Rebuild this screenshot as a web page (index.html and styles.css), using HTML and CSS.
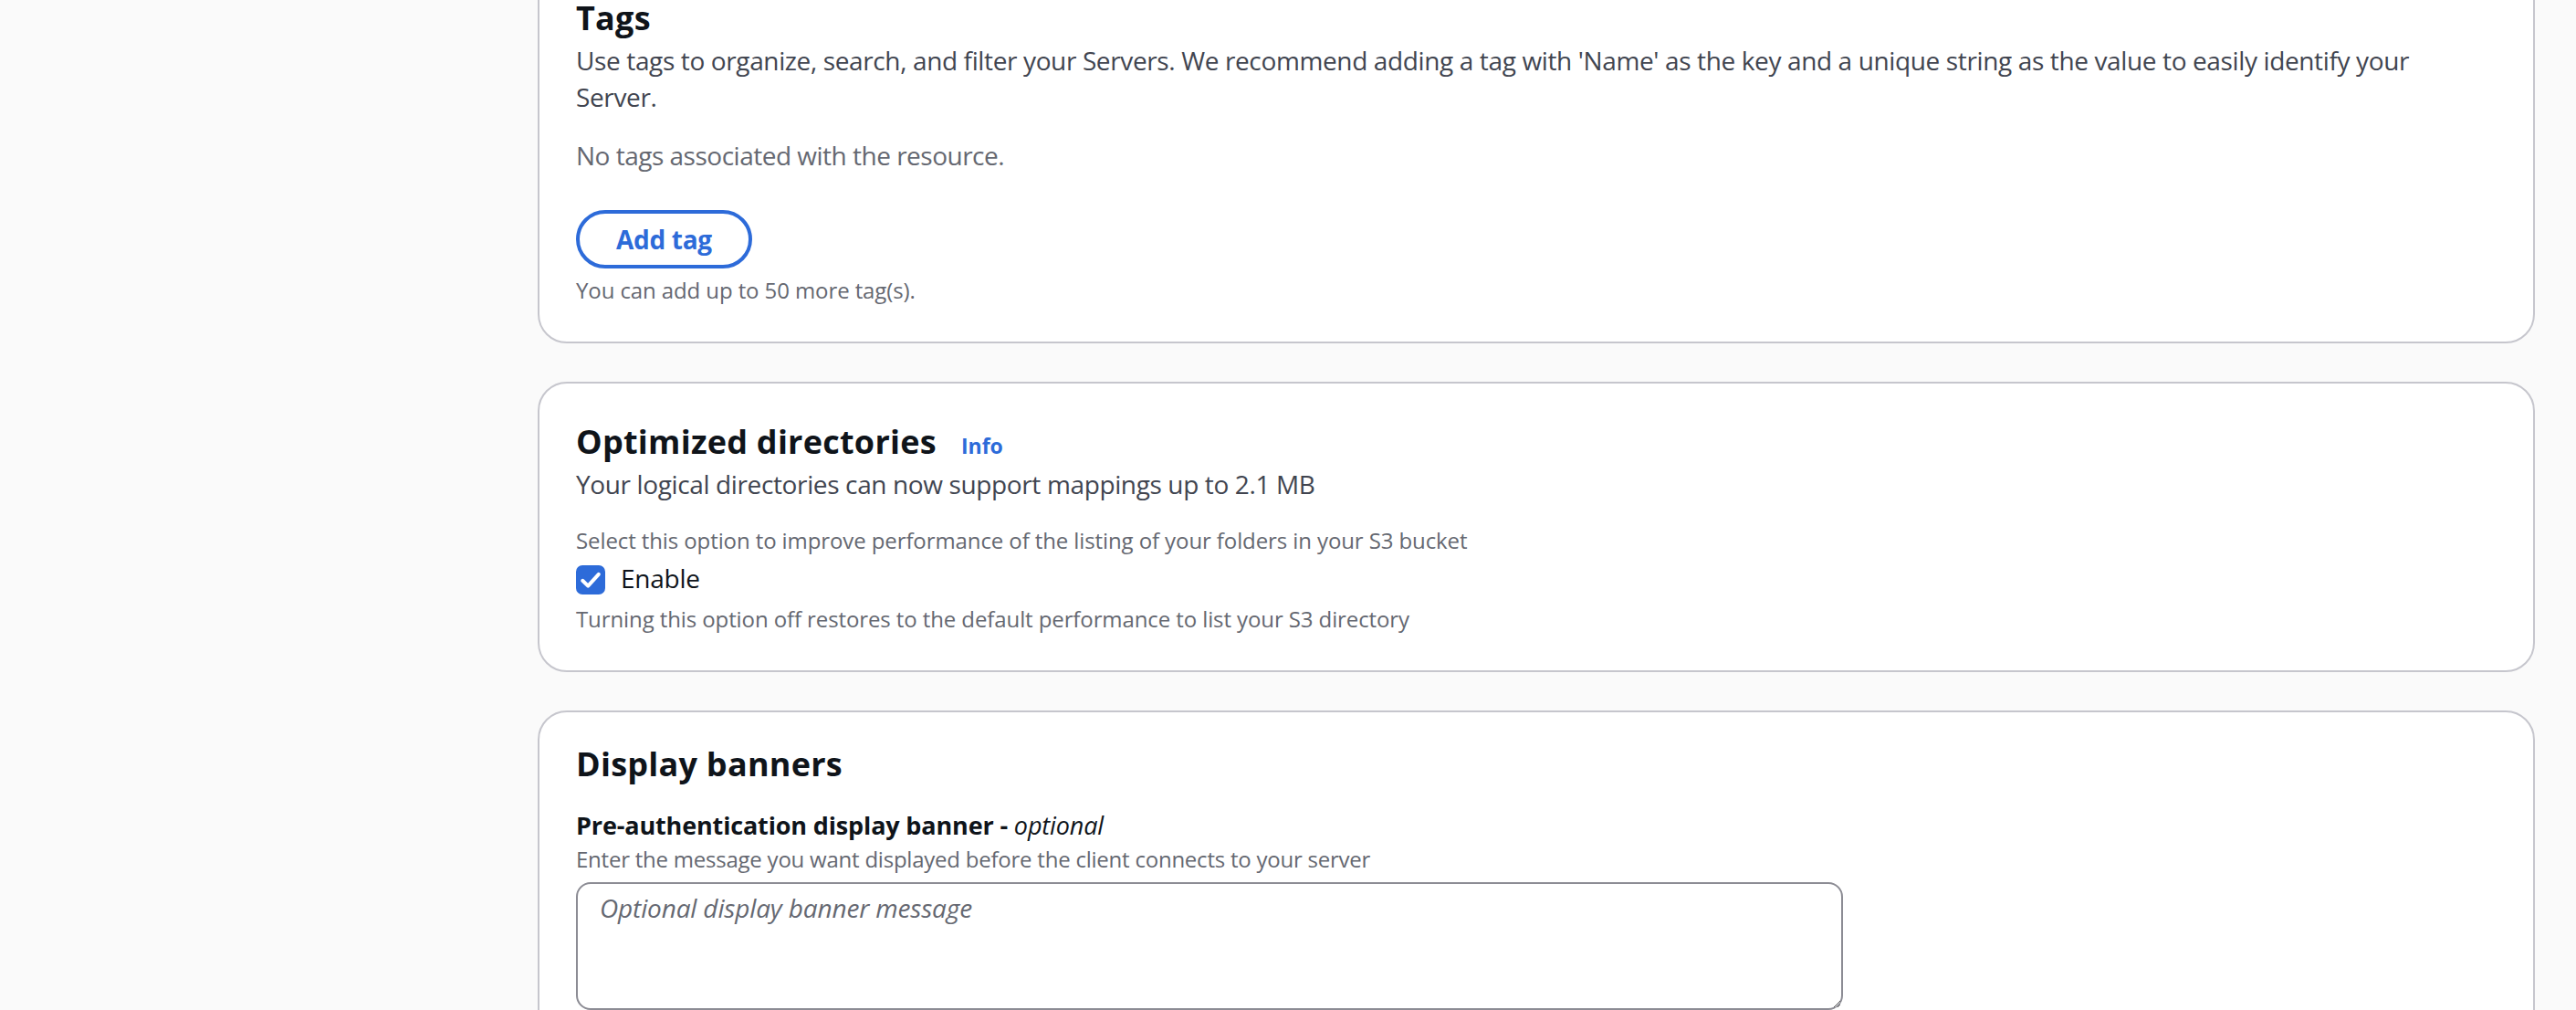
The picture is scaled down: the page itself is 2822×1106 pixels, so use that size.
FILE: index.html
```html
<!DOCTYPE html>
<html lang="en">
<head>
<meta charset="utf-8">
<title>Server settings</title>
<link rel="stylesheet" href="styles.css">
</head>
<body>
<main class="page">
  <section class="card">
    <header class="card-header">
      <h2 class="heading">Tags</h2>
      <p class="header-desc">Use tags to organize, search, and filter your Servers. We recommend adding a tag with 'Name' as the key and a unique string as the value to easily identify your Server.</p>
    </header>
    <p class="empty">No tags associated with the resource.</p>
    <button class="btn-normal" type="button">Add tag</button>
    <p class="hint hint-after-btn">You can add up to 50 more tag(s).</p>
  </section>

  <section class="card">
    <header class="card-header">
      <h2 class="heading">Optimized directories<a class="info" href="#">Info</a></h2>
      <p class="header-desc">Your logical directories can now support mappings up to 2.1 MB</p>
    </header>
    <div class="field">
      <p class="hint">Select this option to improve performance of the listing of your folders in your S3 bucket</p>
      <label class="checkbox">
        <span class="box"><svg viewBox="0 0 16 16" width="32" height="32" aria-hidden="true"><polyline points="3.6,8.4 6.6,11.3 12.4,4.9" fill="none" stroke="#fff" stroke-width="2" stroke-linecap="round" stroke-linejoin="round"/></svg></span>
        <span class="check-label">Enable</span>
      </label>
      <p class="hint hint-constraint">Turning this option off restores to the default performance to list your S3 directory</p>
    </div>
  </section>

  <section class="card card-plain">
    <header class="card-header">
      <h2 class="heading">Display banners</h2>
    </header>
    <div class="form-field">
      <div class="label">Pre-authentication display banner - <i>optional</i></div>
      <p class="hint field-desc">Enter the message you want displayed before the client connects to your server</p>
      <textarea class="textarea" rows="3" placeholder="Optional display banner message"></textarea>
    </div>
  </section>
</main>
</body>
</html>
```

FILE: styles.css
```css
* { box-sizing: border-box; }

html, body {
  margin: 0;
  padding: 0;
  background: #fafafa;
  height: 1106px;
  overflow: hidden;
}

body {
  font-family: "Open Sans", "Noto Sans", sans-serif;
  color: #0f141a;
}

.page {
  margin-top: -46px;
  margin-left: 589px;
  width: 2188px;
  display: flex;
  flex-direction: column;
  gap: 42px;
}

.card {
  background: #ffffff;
  border: 2px solid #c6c6cd;
  border-radius: 32px;
  padding: 40px 40px 40px;
}

.card-plain {
  padding-top: 33px;
  padding-bottom: 80px;
}

.card-header {
  margin: 0;
}

.heading {
  margin: 0;
  font-size: 36px;
  line-height: 48px;
  font-weight: 700;
  letter-spacing: 0.25px;
  color: #0f141a;
}

.info {
  margin-left: 27px;
  font-size: 23px;
  line-height: 32px;
  font-weight: 700;
  letter-spacing: 0;
  color: #2d6bd9;
  text-decoration: none;
}

.header-desc {
  margin: 2px 0 0;
  max-width: 2070px;
  font-size: 28px;
  line-height: 40px;
  letter-spacing: -0.37px;
  color: #414550;
}

.empty {
  margin: 24px 0 0;
  font-size: 28px;
  line-height: 40px;
  letter-spacing: -0.5px;
  color: #656871;
}

.btn-normal {
  display: block;
  margin-top: 40px;
  height: 64px;
  padding: 0 40px;
  border: 4px solid #2d6bd9;
  border-radius: 40px;
  background: #ffffff;
  color: #2d6bd9;
  font-family: "Open Sans", "Noto Sans", sans-serif;
  font-size: 28px;
  line-height: 40px;
  font-weight: 700;
  letter-spacing: -0.3px;
}

.hint {
  margin: 0;
  font-size: 24px;
  line-height: 32px;
  letter-spacing: -0.1px;
  color: #656871;
}

.hint-after-btn {
  margin-top: 8px;
}

.field {
  margin-top: 26px;
}

.checkbox {
  display: flex;
  align-items: flex-start;
  margin-top: 5px;
  font-size: 28px;
  line-height: 40px;
  color: #0f141a;
}

.box {
  width: 32px;
  height: 32px;
  margin-top: 6px;
  border-radius: 7px;
  background: #2d6bd9;
  display: flex;
  flex: none;
}

.check-label {
  padding-left: 17px;
  letter-spacing: -0.25px;
}

.hint-constraint {
  margin-top: 9px;
}

.form-field {
  margin-top: 23px;
}

.label {
  font-size: 27px;
  line-height: 40px;
  font-weight: 700;
  letter-spacing: -0.15px;
  color: #0f141a;
}

.label i {
  font-weight: 400;
  font-style: italic;
}

.field-desc {
  margin-top: 1px;
  letter-spacing: -0.23px;
}

.textarea {
  display: block;
  margin-top: 9px;
  width: 1388px;
  height: 140px;
  padding: 6px 24px;
  border: 2px solid #8c8c94;
  border-radius: 16px;
  background: #ffffff;
  font-family: "Open Sans", "Noto Sans", sans-serif;
  font-size: 28px;
  line-height: 40px;
  letter-spacing: -0.15px;
  color: #0f141a;
  resize: both;
}

.textarea::placeholder {
  color: #656871;
  font-style: italic;
}
```
